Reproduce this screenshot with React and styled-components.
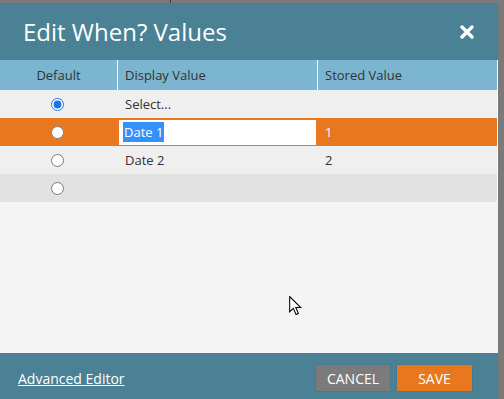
import React from "react";
import styled, { createGlobalStyle } from "styled-components";

const Global = createGlobalStyle`
  html, body {
    margin: 0;
    padding: 0;
    background: #7a7a7a;
    font-family: "Open Sans", "Liberation Sans", sans-serif;
  }
`;

const Screen = styled.div`
  position: relative;
  width: 504px;
  height: 399px;
  overflow: hidden;
  display: flex;
  flex-direction: column;
`;

const TopStrip = styled.div`
  height: 3px;
  flex: none;
  background: linear-gradient(
    to right,
    #7a7a7a 0,
    #7a7a7a 170px,
    #3c3c3c 170px,
    #3c3c3c 171px,
    #7a7a7a 171px
  );
`;

const Dialog = styled.div`
  width: 498px;
  flex: 1;
  display: flex;
  flex-direction: column;
  background: #f4f4f4;
`;

const Header = styled.div`
  height: 57px;
  background: #4a8194;
  display: flex;
  align-items: center;
  justify-content: space-between;
  padding: 0 24px 0 23px;
`;

const Title = styled.h1`
  margin: 0;
  font-size: 24px;
  font-weight: 400;
  color: #fff;
  letter-spacing: 0;
`;

const Close = styled.button`
  border: none;
  background: none;
  padding: 0;
  width: 14px;
  height: 14px;
  display: flex;
  cursor: pointer;
`;

const Table = styled.div`
  display: grid;
  grid-template-columns: 117px 200px 180px;
  border-right: 1px solid #fff;
`;

const HeadCell = styled.div`
  height: 30px;
  display: flex;
  align-items: center;
  justify-content: ${(p) => (p.center ? "center" : "flex-start")};
  padding-left: ${(p) => (p.center ? "0" : "7px")};
  background: #7bb5d0;
  color: #333;
  font-size: 13px;
  border-left: ${(p) => (p.first ? "none" : "1px solid #fff")};
`;

const Row = styled.div`
  display: contents;
`;

const rowBg = { normal: "#efefef", active: "#e8771e", dim: "#e1e1e1" };

const Cell = styled.div`
  height: 28px;
  display: flex;
  align-items: center;
  justify-content: ${(p) => (p.center ? "center" : "flex-start")};
  padding-left: ${(p) => (p.pad ? p.pad : "0")};
  box-sizing: border-box;
  background: ${(p) => rowBg[p.tone]};
  color: ${(p) => (p.tone === "active" ? "#fff" : "#333")};
  font-size: 13px;
`;

const Radio = styled.input.attrs({ type: "radio", name: "def" })`
  margin: 0 3px 0 0;
  width: 13px;
  height: 13px;
  accent-color: #1a73e8;
`;

const EditBox = styled.div`
  width: 197px;
  height: 25px;
  margin-left: 2px;
  background: #fff;
  display: flex;
  align-items: center;
  padding-left: 4px;
  box-sizing: border-box;
`;

const Selected = styled.span`
  background: #3390ff;
  color: #fff;
  font-size: 13px;
  line-height: 20px;
  padding: 0 1px;
`;

const Spacer = styled.div`
  flex: 1;
`;

const Footer = styled.div`
  height: 46px;
  background: #4a8194;
  display: flex;
  align-items: center;
  padding: 0 26px 0 18px;
`;

const Link = styled.a`
  color: #fff;
  font-size: 14px;
  text-decoration: underline;
  margin-top: 4px;
  flex: 1;
`;

const Btn = styled.button`
  width: ${(p) => p.w}px;
  height: 26px;
  border: none;
  margin-left: ${(p) => p.gap || 0}px;
  margin-top: 4px;
  background: ${(p) => (p.primary ? "#e8771e" : "#7b7b7b")};
  color: #fff;
  font-family: inherit;
  font-size: 14px;
  padding: 0;
  box-shadow: 0 0 1px rgba(0, 0, 0, 0.3);
`;

const Cursor = styled.svg`
  position: absolute;
  left: 289px;
  top: 296px;
`;

const rows = [
  { display: "Select...", stored: "", tone: "normal", checked: true },
  { display: "Date 1", stored: "1", tone: "active", editing: true },
  { display: "Date 2", stored: "2", tone: "normal" },
  { display: "", stored: "", tone: "dim" },
];

export default function App() {
  return (
    <Screen>
      <Global />
      <TopStrip />
      <Dialog>
        <Header>
          <Title>Edit When? Values</Title>
          <Close aria-label="Close">
            <svg width="14" height="14" viewBox="0 0 14 14">
              <path
                d="M2 2 L12 12 M12 2 L2 12"
                stroke="#fff"
                strokeWidth="3.4"
                strokeLinecap="round"
              />
            </svg>
          </Close>
        </Header>
        <Table>
          <HeadCell center first>
            Default
          </HeadCell>
          <HeadCell>Display Value</HeadCell>
          <HeadCell>Stored Value</HeadCell>
          {rows.map((r, i) => (
            <Row key={i}>
              <Cell center tone={r.tone}>
                <Radio defaultChecked={!!r.checked} />
              </Cell>
              <Cell tone={r.tone} pad={r.editing ? "0" : "8px"}>
                {r.editing ? (
                  <EditBox>
                    <Selected>{r.display}</Selected>
                  </EditBox>
                ) : (
                  r.display
                )}
              </Cell>
              <Cell tone={r.tone} pad="8px">
                {r.stored}
              </Cell>
            </Row>
          ))}
        </Table>
        <Spacer />
        <Footer>
          <Link href="#">Advanced Editor</Link>
          <Btn w={74}>CANCEL</Btn>
          <Btn w={75} gap={7} primary>
            SAVE
          </Btn>
        </Footer>
      </Dialog>
      <Cursor width="15" height="21" viewBox="0 0 14 20">
        <path
          d="M0.5 0.5 L0.5 15 L4 11.8 L6.6 17.6 L8.8 16.6 L6.3 11 L11 11 Z"
          fill="#fff"
          stroke="#000"
          strokeWidth="1"
          strokeLinejoin="miter"
        />
      </Cursor>
    </Screen>
  );
}
